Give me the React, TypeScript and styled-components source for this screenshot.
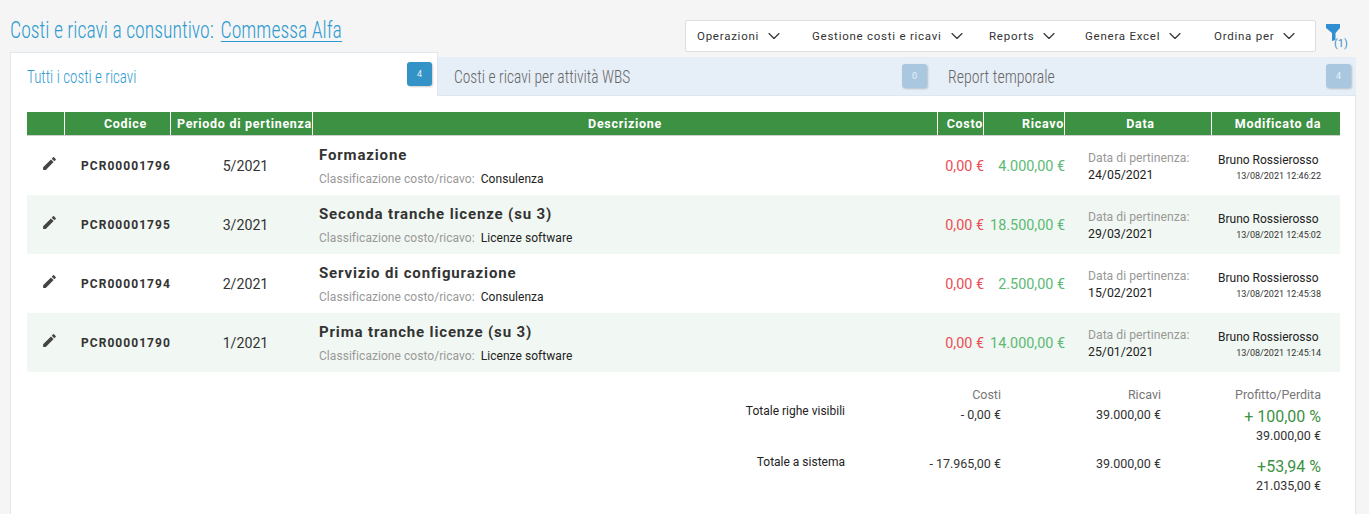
import React from 'react';
import styled, { createGlobalStyle } from 'styled-components';
import { ChevronDown } from 'lucide-react';

const GlobalStyle = createGlobalStyle`
  html, body {
    margin: 0;
    padding: 0;
    height: 514px;
    overflow: hidden;
    background: #f5f5f5;
    font-family: Roboto, "Liberation Sans", sans-serif;
    color: #333;
  }
  * { box-sizing: border-box; }
`;

const Page = styled.div`
  padding: 0 13px 0 10px;
  height: 514px;
  display: flex;
  flex-direction: column;
`;

const Header = styled.div`
  height: 52px;
  display: flex;
  justify-content: space-between;
`;

const Title = styled.h1`
  display: inline-block;
  height: 30px;
  margin: 15px 0 0;
  font-family: "Liberation Sans Narrow", Roboto, sans-serif;
  font-stretch: condensed;
  font-size: 24px;
  line-height: 30px;
  font-weight: 300;
  color: #2f9bd0;
  white-space: nowrap;
  transform: scaleX(0.82);
  transform-origin: left center;
`;

const TitleLink = styled.a`
  display: inline-block;
  line-height: 22px;
  margin-left: 3px;
  color: #2f9bd0;
  text-decoration: none;
  border-bottom: 1px solid #2f9bd0;
`;

const ToolArea = styled.div`
  display: flex;
  align-items: flex-start;
  padding-top: 20px;
`;

const Toolbar = styled.div`
  width: 631px;
  height: 32px;
  display: flex;
  align-items: center;
  background: #fff;
  border: 1px solid #dedede;
  border-radius: 2px;
  padding-left: 11px;
`;

const MenuItem = styled.div<{ $width: number }>`
  width: ${(p) => p.$width}px;
  display: flex;
  align-items: center;
  gap: 5px;
  font-size: 11.5px;
  letter-spacing: 0.75px;
  color: #333;
  white-space: nowrap;
`;

const FilterBox = styled.div`
  position: relative;
  width: 31px;
  height: 32px;
  margin-left: 10px;
  margin-right: -1px;
  padding-top: 4px;
  color: #2f8fd0;
`;

const FilterCount = styled.span`
  position: absolute;
  left: 8px;
  top: 17px;
  font-size: 11px;
  color: #3b8fc8;
`;

const Tabs = styled.div`
  display: flex;
  align-items: flex-end;
  height: 44px;
`;

const Tab = styled.div<{ $active?: boolean; $width: number }>`
  position: relative;
  width: ${(p) => p.$width}px;
  height: ${(p) => (p.$active ? 44 : 39)}px;
  display: flex;
  align-items: center;
  justify-content: space-between;
  padding: ${(p) => (p.$active ? '3px 5px 0 16px' : '0 5px 0 16px')};
  background: ${(p) => (p.$active ? '#fff' : '#e6eef7')};
  border: 1px solid #dfe6ec;
  border-width: ${(p) => (p.$active ? '1px 1px 0 1px' : '0 0 1px 0')};
  color: ${(p) => (p.$active ? '#2f9bd0' : '#666')};
  font-size: 18px;
  font-weight: 300;
`;

const TabLabel = styled.span<{ $scale: number }>`
  display: inline-block;
  font-family: "Liberation Sans Narrow", Roboto, sans-serif;
  font-stretch: condensed;
  white-space: nowrap;
  transform: scaleX(${(p) => p.$scale});
  transform-origin: left center;
`;

const Badge = styled.span<{ $active?: boolean }>`
  width: 25px;
  height: 24px;
  border-radius: 3px;
  display: flex;
  align-items: center;
  justify-content: center;
  margin-top: ${(p) => (p.$active ? -5 : 0)}px;
  font-size: 9px;
  font-weight: 400;
  color: #e8f2f8;
  background: ${(p) => (p.$active ? '#3393c6' : '#a9c8e0')};
  box-shadow: 1px 1px 2px rgba(0, 0, 0, 0.2);
`;

const Panel = styled.div`
  flex: 1;
  background: #fff;
  border-left: 1px solid #dfe6ec;
  border-right: 1px solid #dfe6ec;
  padding: 16px 15px 0 16px;
`;

const columns = '38px 106px 142px 625px 46px 81px 147px 128px';

const TableHead = styled.div`
  display: grid;
  grid-template-columns: ${columns};
  height: 24px;
  background: #3d9142;
  border-bottom: 1px solid #cfcfcf;
`;

const HeadCell = styled.div<{ $align?: string; $pad?: string }>`
  display: flex;
  align-items: center;
  justify-content: ${(p) => p.$align || 'center'};
  padding: ${(p) => p.$pad || '0'};
  border-right: 1px solid #fff;
  color: #fff;
  font-size: 12.5px;
  font-weight: 700;
  letter-spacing: 0.7px;
  white-space: nowrap;
  overflow: hidden;

  &:last-child { border-right: 0; }
`;

const Row = styled.div<{ $shaded: boolean }>`
  display: grid;
  grid-template-columns: ${columns};
  height: 59px;
  align-items: center;
  background: ${(p) => (p.$shaded ? '#f1f7f2' : '#fff')};
`;

const EditCell = styled.div`
  display: flex;
  justify-content: center;
  padding: 0 4px 4px 11px;
  color: #444;
`;

const CodeCell = styled.div`
  padding-left: 16px;
  padding-top: 1px;
  font-size: 12px;
  font-weight: 700;
  letter-spacing: 1.05px;
  color: #333;
`;

const PeriodCell = styled.div`
  text-align: center;
  padding-left: 7px;
  padding-top: 1px;
  font-size: 14.2px;
  color: #333;
`;

const DescCell = styled.div`
  padding-left: 6px;
  margin-top: -1px;
`;

const DescTitle = styled.div`
  font-size: 15px;
  font-weight: 700;
  letter-spacing: 0.85px;
  line-height: 20px;
  color: #333;
`;

const DescMeta = styled.div`
  margin-top: 7px;
  font-size: 12px;
  letter-spacing: 0.05px;
  line-height: 14px;
  color: #999;
`;

const DescValue = styled.span`
  margin-left: 6px;
  color: #222;
`;

const Amount = styled.div<{ $color: string }>`
  text-align: right;
  font-size: 14.4px;
  padding-top: 1px;
  white-space: nowrap;
  color: ${(p) => p.$color};
`;

const DateCell = styled.div`
  padding-left: 23px;
  margin-top: 2px;
`;

const DateLabel = styled.div`
  font-size: 12.2px;
  line-height: 16px;
  color: #999;
`;

const DateValue = styled.div`
  margin-top: 1px;
  font-size: 12.3px;
  line-height: 16px;
  color: #222;
`;

const UserCell = styled.div`
  padding-left: 6px;
  margin-top: 2px;
  width: 109px;
`;

const UserName = styled.div`
  font-size: 12px;
  line-height: 16px;
  color: #222;
  white-space: nowrap;
`;

const UserDate = styled.div`
  font-size: 9px;
  line-height: 12px;
  margin-top: 2px;
  text-align: right;
  color: #333;
  white-space: nowrap;
`;

const Totals = styled.div`
  display: grid;
  grid-template-columns: 818px 156px 160px 160px;
  margin-top: 15px;
`;

const TotalHead = styled.div`
  text-align: right;
  font-size: 12.5px;
  line-height: 16px;
  color: #777;
`;

const TotalRow = styled.div`
  display: contents;
`;

const TotalLabel = styled.div`
  text-align: right;
  font-size: 12px;
  line-height: 16px;
  color: #222;
`;

const TotalValue = styled.div<{ $top: number }>`
  text-align: right;
  font-size: 12.5px;
  line-height: 16px;
  margin-top: ${(p) => p.$top}px;
  color: #333;
`;

const ProfitCell = styled.div<{ $top: number }>`
  text-align: right;
  margin-top: ${(p) => p.$top}px;
  height: 47px;
`;

const Percent = styled.div`
  font-size: 16px;
  line-height: 20px;
  color: #3d9142;
`;

const ProfitValue = styled.div`
  margin-top: 1px;
  font-size: 12.5px;
  line-height: 16px;
  color: #333;
`;

const menus = [
  { label: 'Operazioni', width: 115 },
  { label: 'Gestione costi e ricavi', width: 177 },
  { label: 'Reports', width: 96 },
  { label: 'Genera Excel', width: 129 },
  { label: 'Ordina per', width: 100 },
];

const headers = [
  { label: '' },
  { label: 'Codice', align: 'flex-end', pad: '0 23px 0 0' },
  { label: 'Periodo di pertinenza', align: 'flex-end' },
  { label: 'Descrizione' },
  { label: 'Costo', align: 'flex-end' },
  { label: 'Ricavo', align: 'flex-end' },
  { label: 'Data', pad: '0 0 0 5px' },
  { label: 'Modificato da', pad: '0 0 0 4px' },
];

const rows = [
  { code: 'PCR00001796', period: '5/2021', title: 'Formazione', kind: 'Consulenza', ricavo: '4.000,00 €', date: '24/05/2021', stamp: '13/08/2021 12:46:22' },
  { code: 'PCR00001795', period: '3/2021', title: 'Seconda tranche licenze (su 3)', kind: 'Licenze software', ricavo: '18.500,00 €', date: '29/03/2021', stamp: '13/08/2021 12:45:02' },
  { code: 'PCR00001794', period: '2/2021', title: 'Servizio di configurazione', kind: 'Consulenza', ricavo: '2.500,00 €', date: '15/02/2021', stamp: '13/08/2021 12:45:38' },
  { code: 'PCR00001790', period: '1/2021', title: 'Prima tranche licenze (su 3)', kind: 'Licenze software', ricavo: '14.000,00 €', date: '25/01/2021', stamp: '13/08/2021 12:45:14' },
];

function PencilIcon() {
  return (
    <svg width="17" height="17" viewBox="0 0 24 24" fill="currentColor">
      <path d="M3 17.25V21h3.75L17.81 9.94l-3.75-3.75L3 17.25zM20.71 7.04a1 1 0 0 0 0-1.41l-2.34-2.34a1 1 0 0 0-1.41 0l-1.83 1.83 3.75 3.75 1.83-1.83z" />
    </svg>
  );
}

function FunnelIcon() {
  return (
    <svg width="14" height="17" viewBox="0 0 14 17" fill="currentColor" display="block">
      <path d="M0 0H14V4L9.500 9V16L6 17V9L0 4Z" />
    </svg>
  );
}

export default function App() {
  return (
    <Page>
      <GlobalStyle />
      <Header>
        <Title>
          Costi e ricavi a consuntivo: <TitleLink>Commessa Alfa</TitleLink>
        </Title>
        <ToolArea>
          <Toolbar>
            {menus.map((m) => (
              <MenuItem key={m.label} $width={m.width}>
                {m.label}
                <ChevronDown size={20} strokeWidth={1.4} />
              </MenuItem>
            ))}
          </Toolbar>
          <FilterBox>
            <FunnelIcon />
            <FilterCount>(1)</FilterCount>
          </FilterBox>
        </ToolArea>
      </Header>
      <Tabs>
        <Tab $active $width={428}>
          <TabLabel $scale={0.835}>Tutti i costi e ricavi</TabLabel>
          <Badge $active>4</Badge>
        </Tab>
        <Tab $width={494}>
          <TabLabel $scale={0.86}>Costi e ricavi per attività WBS</TabLabel>
          <Badge>0</Badge>
        </Tab>
        <Tab $width={424}>
          <TabLabel $scale={0.88}>Report temporale</TabLabel>
          <Badge>4</Badge>
        </Tab>
      </Tabs>
      <Panel>
        <TableHead>
          {headers.map((h) => (
            <HeadCell key={h.label} $align={h.align} $pad={h.pad}>
              {h.label}
            </HeadCell>
          ))}
        </TableHead>
        {rows.map((r, i) => (
          <Row key={r.code} $shaded={i % 2 === 1}>
            <EditCell>
              <PencilIcon />
            </EditCell>
            <CodeCell>{r.code}</CodeCell>
            <PeriodCell>{r.period}</PeriodCell>
            <DescCell>
              <DescTitle>{r.title}</DescTitle>
              <DescMeta>
                Classificazione costo/ricavo:
                <DescValue>{r.kind}</DescValue>
              </DescMeta>
            </DescCell>
            <Amount $color="#ea4d55">0,00 €</Amount>
            <Amount $color="#5bb974">{r.ricavo}</Amount>
            <DateCell>
              <DateLabel>Data di pertinenza:</DateLabel>
              <DateValue>{r.date}</DateValue>
            </DateCell>
            <UserCell>
              <UserName>Bruno Rossierosso</UserName>
              <UserDate>{r.stamp}</UserDate>
            </UserCell>
          </Row>
        ))}
        <Totals>
          <TotalHead />
          <TotalHead>Costi</TotalHead>
          <TotalHead>Ricavi</TotalHead>
          <TotalHead>Profitto/Perdita</TotalHead>
          <TotalRow>
            <TotalLabel>Totale righe visibili</TotalLabel>
            <TotalValue $top={4}>- 0,00 €</TotalValue>
            <TotalValue $top={4}>39.000,00 €</TotalValue>
            <ProfitCell $top={4}>
              <Percent>+ 100,00 %</Percent>
              <ProfitValue>39.000,00 €</ProfitValue>
            </ProfitCell>
          </TotalRow>
          <TotalRow>
            <TotalLabel>Totale a sistema</TotalLabel>
            <TotalValue $top={2}>- 17.965,00 €</TotalValue>
            <TotalValue $top={2}>39.000,00 €</TotalValue>
            <ProfitCell $top={3}>
              <Percent>+53,94 %</Percent>
              <ProfitValue>21.035,00 €</ProfitValue>
            </ProfitCell>
          </TotalRow>
        </Totals>
      </Panel>
    </Page>
  );
}
